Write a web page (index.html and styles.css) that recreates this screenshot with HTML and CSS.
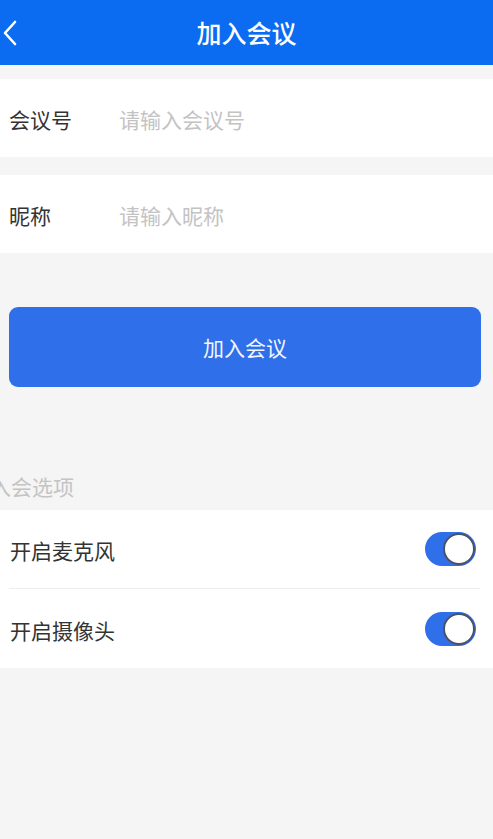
FILE: index.html
```html
<!DOCTYPE html>
<html lang="zh-CN">
<head>
<meta charset="utf-8">
<title>加入会议</title>
<link rel="stylesheet" href="styles.css">
</head>
<body>
<div class="page">
  <header class="navbar">
    <div class="nav-back">
      <svg width="16" height="28" viewBox="0 0 16 28"><path d="M13 3 L3 14 L13 25" fill="none" stroke="#ffffff" stroke-width="2.6" stroke-linecap="round" stroke-linejoin="round"/></svg>
    </div>
    <div class="nav-title">加入会议</div>
    <div class="nav-right"></div>
  </header>

  <div class="form">
    <div class="field">
      <span class="field-label">会议号</span>
      <span class="field-input">请输入会议号</span>
    </div>
    <div class="field">
      <span class="field-label">昵称</span>
      <span class="field-input">请输入昵称</span>
    </div>
  </div>

  <div class="btn-wrap">
    <div class="btn">加入会议</div>
  </div>

  <div class="section-label">入会选项</div>
  <div class="options">
    <div class="option">
      <span class="option-text">开启麦克风</span>
      <span class="switch"><span class="knob"></span></span>
    </div>
    <div class="option">
      <span class="option-text">开启摄像头</span>
      <span class="switch"><span class="knob"></span></span>
    </div>
  </div>
</div>
</body>
</html>
```

FILE: styles.css
```css
* { box-sizing: border-box; }
html, body {
  margin: 0;
  padding: 0;
  background: #f5f5f5;
  font-family: "Noto Sans CJK SC", "Noto Sans", sans-serif;
  overflow: hidden;
}
.page {
  width: 493px;
  height: 839px;
  display: flex;
  flex-direction: column;
}
.navbar {
  height: 65px;
  background: #0b6cf1;
  display: grid;
  grid-template-columns: 60px 1fr 60px;
  align-items: center;
}
.nav-back {
  display: flex;
  align-items: center;
  padding-left: 2px;
  height: 65px;
}
.nav-title {
  text-align: center;
  color: #ffffff;
  font-size: 25px;
  line-height: 30px;
  font-weight: 500;
  margin-top: -2px;
}
.form {
  margin-top: 14px;
  display: flex;
  flex-direction: column;
  gap: 18px;
}
.field {
  height: 78px;
  background: #ffffff;
  display: flex;
  align-items: center;
  padding-left: 9px;
  padding-top: 2px;
}
.field-label {
  width: 110px;
  color: #333333;
  font-size: 21px;
}
.field-input {
  color: #c3c3c3;
  font-size: 21px;
}
.btn-wrap {
  padding: 54px 12px 0 9px;
}
.btn {
  height: 80px;
  border-radius: 9px;
  background: #2f6fe9;
  color: #f2f6ff;
  font-size: 21px;
  display: flex;
  align-items: center;
  justify-content: center;
}
.section-label {
  margin-top: 85px;
  height: 38px;
  line-height: 28px;
  color: #c4c4c4;
  font-size: 21px;
  text-indent: -10px;
}
.options {
  background: #ffffff;
  display: flex;
  flex-direction: column;
}
.option {
  height: 78px;
  display: flex;
  align-items: center;
  justify-content: space-between;
  padding: 0 17px 0 10px;
  color: #333333;
  font-size: 21px;
}
.option + .option {
  height: 80px;
  border-top: 1px solid #ededed;
  margin-left: 9px;
  margin-right: 13px;
  padding-left: 1px;
  padding-right: 4px;
}
.option-text {
  margin-top: 2px;
}
.switch {
  width: 51px;
  height: 34px;
  border-radius: 17px;
  background: #2f6fe9;
  display: flex;
  align-items: center;
  justify-content: flex-end;
  padding-right: 1px;
}
.knob {
  width: 32px;
  height: 32px;
  border-radius: 50%;
  background: #ffffff;
  border: 2px solid #4a5365;
}
```
